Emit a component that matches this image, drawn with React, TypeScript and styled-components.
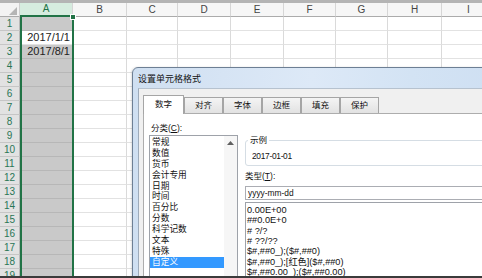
import React from "react";
import styled, { createGlobalStyle, css } from "styled-components";

const GlobalStyle = createGlobalStyle`
  html, body { margin: 0; padding: 0; background: #fff; }
  body {
    width: 482px; height: 278px; overflow: hidden;
    font-family: "Liberation Sans", "Noto Sans CJK SC", sans-serif;
  }
`;

const Screen = styled.div`
  position: relative;
  width: 482px;
  height: 278px;
  overflow: hidden;
  box-sizing: border-box;
  border-bottom: 2px solid #3b3b3b;
  background: #fff;
`;

/* ---------- spreadsheet ---------- */
const Sheet = styled.div`
  display: flex;
  flex-direction: column;
`;

const TopStrip = styled.div`
  height: 3px;
  flex: none;
  background: #b4b4b4;
`;

const Row = styled.div`
  display: flex;
  height: 14px;
  flex: none;
`;

const Corner = styled.div`
  width: 20px;
  flex: none;
  box-sizing: border-box;
  border-right: 1px solid #cfcfcf;
  border-bottom: 1px solid #ababab;
  background: #f3f3f3;
  display: flex;
  align-items: flex-end;
  justify-content: flex-end;
  padding: 0 2px 1px 0;
`;

const ColHeader = styled.div<{ $w: number; $sel?: boolean }>`
  width: ${(p) => p.$w}px;
  flex: none;
  box-sizing: border-box;
  border-right: 1px solid #d6d6d6;
  border-bottom: 1px solid #ababab;
  background: #f6f6f6;
  color: #444;
  font-size: 10px;
  line-height: 13px;
  text-align: center;
  ${(p) =>
    p.$sel &&
    css`
      background: #d6ecdf;
      color: #217346;
      border-bottom: 2px solid #217346;
      line-height: 12px;
    `}
`;

const RowHeader = styled.div`
  width: 20px;
  flex: none;
  box-sizing: border-box;
  border-right: 1px solid #b9b9b9;
  border-bottom: 1px solid #c6c6c6;
  background: #e2e2e2;
  color: #2a7656;
  font-size: 10px;
  line-height: 13px;
  text-align: center;
`;

const Cell = styled.div<{ $w: number; $sel?: boolean; $active?: boolean }>`
  width: ${(p) => p.$w}px;
  flex: none;
  box-sizing: border-box;
  border-right: 1px solid #dadada;
  border-bottom: 1px solid #e2e2e2;
  background: #fff;
  color: #222;
  font-size: 11px;
  line-height: 13px;
  text-align: right;
  padding-right: 2px;
  white-space: nowrap;
  ${(p) =>
    p.$sel &&
    !p.$active &&
    css`
      background: #c9c9c9;
      border-bottom-color: #b7b7b7;
      border-right-color: #c9c9c9;
    `}
`;

const SelectionFrame = styled.div`
  position: absolute;
  left: 20px;
  top: 17px;
  width: 54px;
  height: 300px;
  box-sizing: border-box;
  border-left: 2px solid #217346;
  border-right: 2px solid #217346;
  pointer-events: none;
`;

const FillHandle = styled.div`
  position: absolute;
  right: -3px;
  top: -2px;
  width: 4px;
  height: 4px;
  background: #217346;
  outline: 1px solid #fff;
`;

/* ---------- dialog ---------- */
const Dialog = styled.div`
  position: absolute;
  left: 132px;
  top: 67px;
  width: 400px;
  height: 240px;
  box-sizing: border-box;
  border: 1px solid #6d7f94;
  border-radius: 6px 6px 0 0;
  background: linear-gradient(90deg, #cfdff1 0%, #dde9f7 45%, #d3e3f4 70%, #cddef2 100%);
  display: flex;
  flex-direction: column;
  box-shadow: -1px 0 2px rgba(0, 0, 0, 0.12);
`;

const TitleBar = styled.div`
  height: 20px;
  flex: none;
  display: flex;
  align-items: center;
  padding-left: 5px;
  font-size: 9px;
  color: #111;
`;

const Client = styled.div`
  flex: 1;
  margin-left: 5px;
  background: #f0f0f0;
  border-left: 1px solid #9eabba;
  border-top: 1px solid #b6c2cf;
  padding: 6px 0 0 4px;
  display: flex;
  flex-direction: column;
`;

const TabStrip = styled.div`
  display: flex;
  align-items: flex-end;
  height: 18px;
  flex: none;
  position: relative;
  z-index: 1;
`;

const Tab = styled.div<{ $active?: boolean }>`
  width: 39px;
  height: 16px;
  flex: none;
  box-sizing: border-box;
  border: 1px solid #a5a5a5;
  border-bottom: none;
  background: linear-gradient(#f4f4f4, #e2e2e2);
  font-size: 8.5px;
  line-height: 15px;
  text-align: center;
  color: #111;
  ${(p) =>
    p.$active &&
    css`
      width: 41px;
      height: 19px;
      margin-bottom: -1px;
      background: #fff;
      line-height: 17px;
    `}
`;

const Panel = styled.div`
  flex: 1;
  background: #fff;
  border: 1px solid #adadad;
  padding: 9px 0 0 5px;
  display: flex;
  gap: 7px;
  font-size: 8.5px;
  color: #111;
`;

const LeftCol = styled.div`
  width: 89px;
  flex: none;
  display: flex;
  flex-direction: column;
`;

const FieldLabel = styled.div<{ $indent?: number }>`
  height: 11px;
  line-height: 11px;
  padding-left: ${(p) => p.$indent ?? 0}px;
  margin-bottom: 1px;
  white-space: nowrap;
  u { text-decoration: underline; }
`;

const CategoryList = styled.div`
  height: 160px;
  border: 1px solid #9ea2a9;
  background: #fff;
  display: flex;
`;

const CategoryItems = styled.div`
  flex: 1;
  padding-top: 1px;
`;

const CategoryItem = styled.div<{ $sel?: boolean }>`
  height: 10.9px;
  line-height: 10.9px;
  font-size: 8.7px;
  padding-left: 2px;
  white-space: nowrap;
  ${(p) =>
    p.$sel &&
    css`
      background: #3399ff;
      color: #fff;
    `}
`;

const ScrollBar = styled.div`
  width: 13px;
  flex: none;
  background: #f6f6f6;
  display: flex;
  flex-direction: column;
  align-items: center;
`;

const ScrollArrow = styled.div`
  height: 13px;
  display: flex;
  align-items: center;
  justify-content: center;
`;

const RightCol = styled.div`
  flex: 1;
  display: flex;
  flex-direction: column;
  min-width: 0;
`;

const GroupBox = styled.fieldset`
  margin: 12px 0 0 0;
  padding: 0 0 0 6px;
  border: 1px solid #d5dde4;
  border-radius: 3px;
  min-width: 0;
`;

const GroupLegend = styled.legend`
  font-size: 8.5px;
  line-height: 10px;
  padding: 0 2px;
  margin-left: -4px;
  color: #111;
`;

const SampleText = styled.div`
  line-height: 10px;
  padding: 6px 0 4px 0;
  font-size: 8.4px;
  letter-spacing: -0.3px;
`;

const TypeLabel = styled.div`
  margin-top: 5px;
  line-height: 10px;
  height: 10px;
  white-space: nowrap;
`;

const TextBox = styled.div`
  margin-top: 5px;
  height: 14px;
  box-sizing: border-box;
  border: 1px solid #abadb3;
  padding-left: 2px;
  line-height: 12px;
  font-size: 8.4px;
`;

const FormatList = styled.div`
  margin-top: 2px;
  height: 100px;
  border: 1px solid #9ea2a9;
  padding: 1.8px 0 0 1px;
`;

const FormatItem = styled.div`
  height: 10.4px;
  line-height: 10.4px;
  font-size: 9.2px;
  white-space: nowrap;
`;

const colWidths = [53, 54, 51, 53, 53, 52, 52, 54, 54];
const colNames = ["A", "B", "C", "D", "E", "F", "G", "H", "I"];
const cellText: Record<number, string> = { 2: "2017/1/1", 3: "2017/8/1" };

const tabs = ["数字", "对齐", "字体", "边框", "填充", "保护"];
const categories = [
  "常规", "数值", "货币", "会计专用", "日期", "时间",
  "百分比", "分数", "科学记数", "文本", "特殊", "自定义",
];
const formats = [
  "0.00E+00",
  "##0.0E+0",
  "# ?/?",
  "# ??/??",
  "$#,##0_);($#,##0)",
  "$#,##0_);[红色]($#,##0)",
  "$#,##0.00_);($#,##0.00)",
];

export default function App() {
  const rows = Array.from({ length: 19 }, (_, i) => i + 1);
  return (
    <Screen>
      <GlobalStyle />
      <Sheet>
        <TopStrip />
        <Row>
          <Corner>
            <svg width="8" height="8" viewBox="0 0 8 8">
              <polygon points="8,0 8,8 0,8" fill="#b5b5b5" />
            </svg>
          </Corner>
          {colNames.map((c, i) => (
            <ColHeader key={c} $w={colWidths[i]} $sel={i === 0}>
              {c}
            </ColHeader>
          ))}
        </Row>
        {rows.map((r) => (
          <Row key={r}>
            <RowHeader>{r}</RowHeader>
            {colWidths.map((w, i) => (
              <Cell key={i} $w={w} $sel={i === 0} $active={i === 0 && r === 2}>
                {i === 0 ? cellText[r] ?? "" : ""}
              </Cell>
            ))}
          </Row>
        ))}
      </Sheet>
      <SelectionFrame>
        <FillHandle />
      </SelectionFrame>

      <Dialog>
        <TitleBar>设置单元格格式</TitleBar>
        <Client>
          <TabStrip>
            {tabs.map((t, i) => (
              <Tab key={t} $active={i === 0}>
                {t}
              </Tab>
            ))}
          </TabStrip>
          <Panel>
            <LeftCol>
              <FieldLabel $indent={2}>
                分类(<u>C</u>):
              </FieldLabel>
              <CategoryList>
                <CategoryItems>
                  {categories.map((c, i) => (
                    <CategoryItem key={c} $sel={i === categories.length - 1}>
                      {c}
                    </CategoryItem>
                  ))}
                </CategoryItems>
                <ScrollBar>
                  <ScrollArrow>
                    <svg width="7" height="4" viewBox="0 0 7 4">
                      <polygon points="3.5,0 7,4 0,4" fill="#606060" />
                    </svg>
                  </ScrollArrow>
                </ScrollBar>
              </CategoryList>
            </LeftCol>
            <RightCol>
              <GroupBox>
                <GroupLegend>示例</GroupLegend>
                <SampleText>2017-01-01</SampleText>
              </GroupBox>
              <TypeLabel>
                类型(<u>T</u>):
              </TypeLabel>
              <TextBox>yyyy-mm-dd</TextBox>
              <FormatList>
                {formats.map((f) => (
                  <FormatItem key={f}>{f}</FormatItem>
                ))}
              </FormatList>
            </RightCol>
          </Panel>
        </Client>
      </Dialog>
    </Screen>
  );
}
